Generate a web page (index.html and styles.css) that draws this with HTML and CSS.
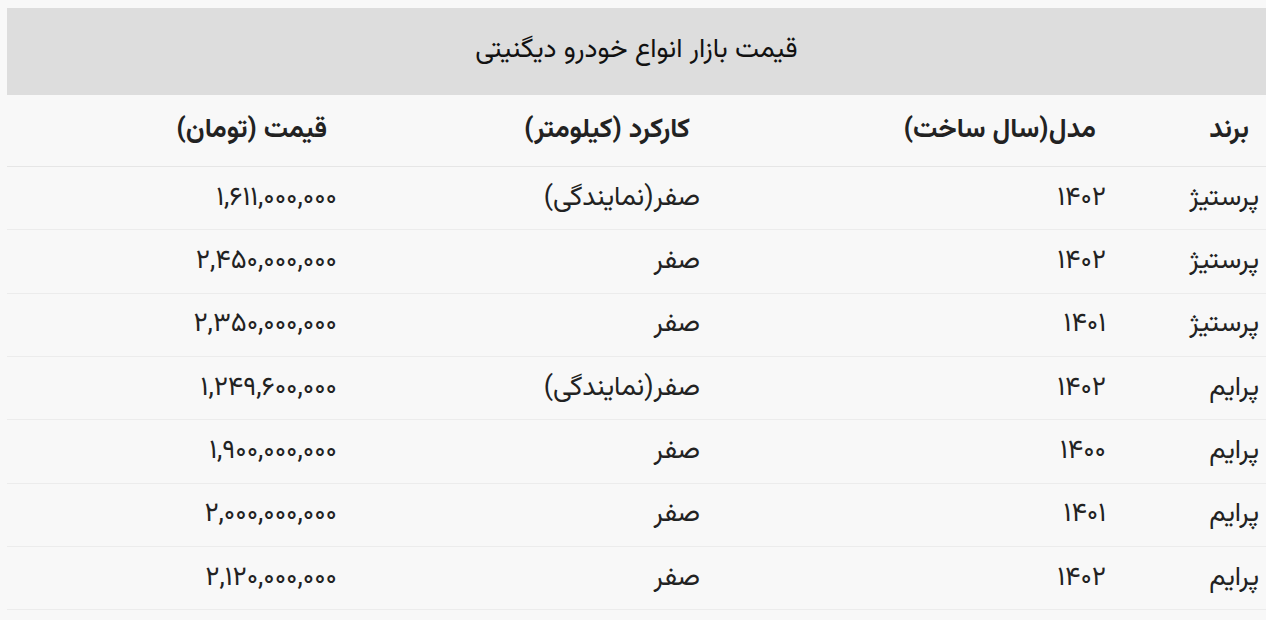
FILE: index.html
```html
<!DOCTYPE html>
<html lang="fa" dir="rtl">
<head>
<meta charset="utf-8">
<link rel="stylesheet" href="styles.css">
</head>
<body>
<div class="wrap">
<table class="prices">
  <colgroup>
    <col class="c-brand">
    <col class="c-model">
    <col class="c-km">
    <col class="c-price">
  </colgroup>
  <thead>
    <tr><th class="title" colspan="4">قیمت بازار انواع خودرو دیگنیتی</th></tr>
    <tr class="head">
      <th>برند</th>
      <th>مدل(سال ساخت)</th>
      <th>کارکرد (کیلومتر)</th>
      <th>قیمت (تومان)</th>
    </tr>
  </thead>
  <tbody>
    <tr><td>پرستیژ</td><td>۱۴۰۲</td><td>صفر(نمایندگی)</td><td>۱,۶۱۱,۰۰۰,۰۰۰</td></tr>
    <tr><td>پرستیژ</td><td>۱۴۰۲</td><td>صفر</td><td>۲,۴۵۰,۰۰۰,۰۰۰</td></tr>
    <tr><td>پرستیژ</td><td>۱۴۰۱</td><td>صفر</td><td>۲,۳۵۰,۰۰۰,۰۰۰</td></tr>
    <tr><td>پرایم</td><td>۱۴۰۲</td><td>صفر(نمایندگی)</td><td>۱,۲۴۹,۶۰۰,۰۰۰</td></tr>
    <tr><td>پرایم</td><td>۱۴۰۰</td><td>صفر</td><td>۱,۹۰۰,۰۰۰,۰۰۰</td></tr>
    <tr><td>پرایم</td><td>۱۴۰۱</td><td>صفر</td><td>۲,۰۰۰,۰۰۰,۰۰۰</td></tr>
    <tr><td>پرایم</td><td>۱۴۰۲</td><td>صفر</td><td>۲,۱۲۰,۰۰۰,۰۰۰</td></tr>
  </tbody>
</table>
</div>
</body>
</html>
```
FILE: styles.css
```css
html, body {
  background: #f8f8f8;
}
body {
  margin: 8px 0 0 0;
  font-family: "Vazirmatn", "Vazir", "Noto Sans Arabic", "DejaVu Sans", sans-serif;
  color: #222;
}
.wrap {
  padding-left: 7px;
}
.prices {
  width: 100%;
  border-collapse: collapse;
  table-layout: fixed;
  font-size: 27px;
}
.c-brand { width: 153px; }
.c-model { width: 406px; }
.c-km { width: 363px; }
.c-price { width: auto; }
.title {
  background: #dddddd;
  height: 84px;
  padding: 0 0 3px 0;
  text-align: center;
  font-weight: normal;
  font-size: 27px;
  color: #111;
  line-height: 1;
}
.head th {
  height: 71px;
  padding: 0 17px 0 0;
  text-align: right;
  font-weight: bold;
  border-bottom: 1px solid #e6e6e6;
  line-height: 1;
}
tbody td {
  height: 62.33px;
  padding: 0 7px 0 0;
  text-align: right;
  border-bottom: 1px solid #ececec;
  vertical-align: middle;
  line-height: 1;
}
```
